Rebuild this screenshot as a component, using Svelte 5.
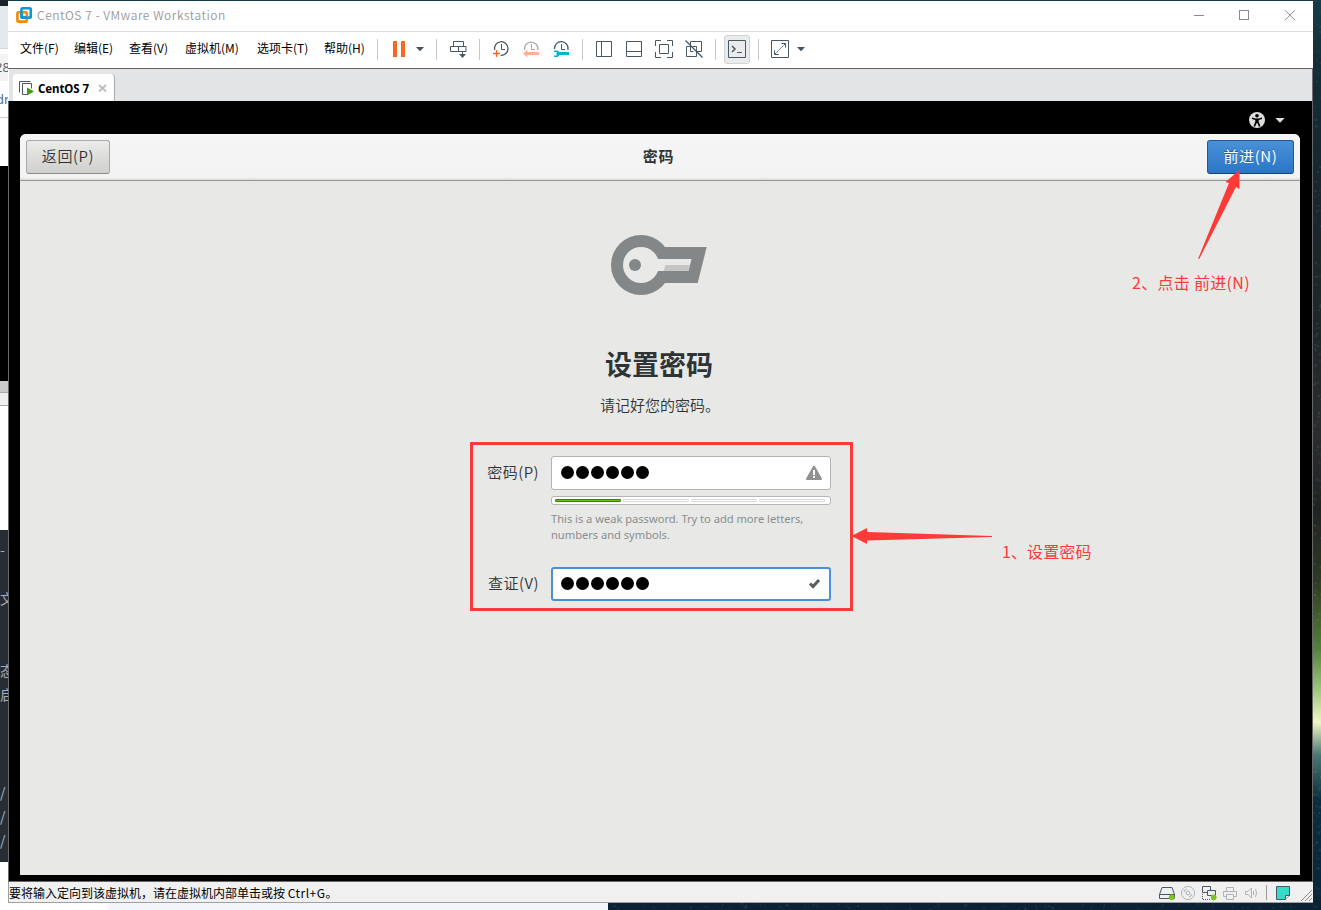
<script>
  const menus = ['文件(F)', '编辑(E)', '查看(V)', '虚拟机(M)', '选项卡(T)', '帮助(H)'];
  const dots = [0, 1, 2, 3, 4, 5];
  const noise = (n) => {
    const v = Math.sin(n * 12.9898) * 43758.5453;
    return v - Math.floor(v);
  };
  const stars = Array.from({ length: 260 }, (_, i) => ({
    x: 1313 + noise(i + 1) * 8,
    y: noise(i + 301) * 910,
    o: noise(i + 601) * 0.14
  }));
  const bottomStars = Array.from({ length: 160 }, (_, i) => ({
    x: 608 + noise(i + 901) * 712,
    y: 903 + noise(i + 1201) * 7,
    o: noise(i + 1501) * 0.12
  }));
</script>

<div class="desktop">
  <div class="behind">
    <div class="b1"></div>
    <div class="b2"></div>
    <div class="b3">28</div>
    <div class="b4">dr</div>
    <div class="b5"></div>
    <div class="b6"></div>
    <div class="b7"></div>
    <div class="b8"></div>
    <div class="b9"></div>
    <div class="editor">
      <span class="l1">-</span><span class="l2">文</span><span class="l3">态</span><span class="l4">启</span>
      <span class="l5">/</span><span class="l5">/</span><span class="l5">/</span>
    </div>
  </div>
  <div class="pale"></div>
  <svg class="sky" viewBox="0 0 1321 910">
    {#each [...stars, ...bottomStars] as s}
      <rect x={s.x} y={s.y} width="2" height="2" fill="#a9c4c8" opacity={s.o} />
    {/each}
  </svg>

  <div class="window">
    <header class="titlebar">
      <svg class="logo" viewBox="16 6 17 18" width="17" height="18">
        <rect x="21.5" y="8.3" width="9.3" height="9.3" rx="1.2" fill="none" stroke="#0e95d3" stroke-width="2.6" />
        <rect x="17.4" y="12.2" width="9.4" height="9.4" rx="1.2" fill="none" stroke="#f38b00" stroke-width="2.6" />
        <path d="M21.5 11v5.6a1 1 0 0 0 1 1h5" fill="none" stroke="#0e95d3" stroke-width="2.6" />
      </svg>
      <span class="title">CentOS 7 - VMware Workstation</span>
      <svg class="controls" viewBox="1176 1 137 30" width="137" height="30" fill="none" stroke="#8b8b8b">
        <path d="M1194 15.5h10" /><rect x="1239.500" y="10.500" width="9" height="9" /><path d="M1285 10.200l10 10M1295 10.200l-10 10" />
      </svg>
    </header>

    <div class="menubar">
      <nav>{#each menus as m}<span>{m}</span>{/each}</nav>
      <i class="sep"></i>
      <svg viewBox="384 32 30 36" width="30"><path d="M393 41h4v16h-4zM401 41h4v16h-4z" fill="#fc671c" /></svg>
      <svg viewBox="414 32 16 36" width="16"><path d="M416 47h8l-4 4.300z" fill="#44525f" /></svg>
      <i class="sep"></i>
      <svg class="line" viewBox="443 32 30 36" width="30"><path d="M453.500 41.500h10v5h-10zM450.500 46.500h15.500v5h-15.500zM458.500 46.500v5M462.500 51.500v5" /><path d="M459 54h7l-3.500 4z" fill="#485865" stroke="none" /></svg>
      <i class="sep"></i>
      <svg class="line" viewBox="486 32 30 36" width="30"><path d="M494.600 50a6.800 6.800 0 1 1 6 5.300" stroke-width="1.300" /><path d="M501.500 44v5.500h3.500" /><path d="M496.500 50v7M493 53.500h7" stroke="#fc671c" stroke-width="1.300" /></svg>
      <svg class="line" viewBox="516 32 30 36" width="30"><path d="M524.500 50a6.800 6.800 0 1 1 13.400 0" stroke="#a4abb2" stroke-width="1.300" /><path d="M531.500 44v5.500h3.500" stroke="#a4abb2" /><path d="M523 53.500l4.500-4v2.500H539v3h-11.500v2.500z" fill="#ffb28e" stroke="none" /></svg>
      <svg class="line" viewBox="546 32 30 36" width="30"><path d="M554.500 49a6.800 6.800 0 1 1 13.400 1" stroke-width="1.300" /><path d="M561.500 44v5.500h3.500" /><path d="M554 50.500h3c1 0 2 1 2.500 1.500H569v3h-9.500c-.5 1-1.500 2-2.500 2h-3v-1.500h2.500v-3.500H554z" fill="#08b4d2" stroke="none" /></svg>
      <i class="sep"></i>
      <svg class="line" viewBox="589 32 30 36" width="30"><path d="M596.500 41.500h15v15h-15zM601.500 41.500v15" /></svg>
      <svg class="line" viewBox="619 32 30 36" width="30"><path d="M626.500 41.500h15v15h-15zM626.500 51.500h15" /></svg>
      <svg class="line" viewBox="649 32 30 36" width="30"><path d="M655.500 46v-5.500h5.500M667 40.500h5.500V46M672.500 52v5.500H667M661 57.500h-5.500V52M659.500 44.500h9v9h-9z" /></svg>
      <svg class="line" viewBox="679 32 30 36" width="30"><path d="M690.500 46.500v-5h11v10h-5M686.500 46.500h6M686.500 46.500v10h10v-8M690.500 46.500v5h3M693 46.500h3.500v2" /><path d="M685.500 40.500l17 17" stroke-width="1.200" /></svg>
      <i class="sep"></i>
      <svg class="line" viewBox="722 32 30 36" width="30"><rect x="724.500" y="35.500" width="25" height="28" rx="2.500" fill="#e9ebed" stroke="#cfd3d4" /><path d="M728.500 40.500h17v17h-17z" /><path d="M732 46l3 3-3 3" stroke-width="1.500" /><path d="M737 52.500h5" /></svg>
      <i class="sep"></i>
      <svg class="line" viewBox="765 32 30 36" width="30"><path d="M771.500 40.500h17v17h-17zM781.500 43.500h4v4M774.500 50.500v4h4" /><path d="M785 44l-10 10" stroke-dasharray="2 1" /></svg>
      <svg viewBox="795 32 16 36" width="16"><path d="M797 47h8l-4 4.300z" fill="#44525f" /></svg>
    </div>

    <div class="tabs">
      <div class="tab">
        <svg viewBox="19 80 15 16" width="15" height="16" fill="none" stroke="#4b5a66"><path d="M19.500 92.500v-11h11" /><path d="M27 94.500h-4.500v-11h9v5" /><path d="M27 87.500l7 4-7 4z" fill="#47990f" stroke="none" /></svg>
        <b>CentOS 7</b>
        <svg viewBox="98 83 9 9" width="9" height="9" stroke="#bdbdbd" stroke-width="1.800"><path d="M99 84l7 6.500M106 84l-7 6.500" /></svg>
      </div>
    </div>

    <main class="guest">
      <div class="topbar">
        <svg viewBox="1245 108 44 24" width="44" height="24">
          <circle cx="1257" cy="120" r="8" fill="#dcdcdc" />
          <circle cx="1257" cy="115.700" r="1.800" /><path d="M1252 117.500l3.500 1h3l3.500-1v1.500l-3.300 1v1.800l1.800 4.400-1.500.5-2-4.200-2 4.200-1.500-.5 1.800-4.400V120l-3.300-1z" />
          <path d="M1275.300 118h9.400l-4.700 4.800z" fill="#dcdcdc" />
        </svg>
      </div>
      <section class="screen">
        <div class="head">
          <button class="back">返回(P)</button>
          <h1>密码</h1>
          <button class="next">前进(N)</button>
        </div>
        <div class="body">
          <svg class="key" viewBox="610 234 98 62" width="98" height="62">
            <circle cx="641" cy="265" r="30" fill="#848787" /><path d="M660 247h46.700l-9 36H660z" fill="#848787" />
            <circle cx="641" cy="265" r="18" fill="#e9e9e7" /><path d="M656 259h35.500l-3 12H656z" fill="#e9e9e7" />
            <path d="M665.300 265h24.700l-1.500 6h-24.700z" fill="#c4c5c4" /><circle cx="635" cy="265" r="6" fill="#848787" />
          </svg>
          <h2>设置密码</h2>
          <p class="sub">请记好您的密码。</p>
          <div class="form">
            <label for="pw">密码(P)</label>
            <div class="field" id="pw">
              {#each dots as d}<i></i>{/each}
              <svg viewBox="805 464 18 17" width="18" height="17"><path d="M814 466.500l7 12.500h-14z" fill="#929292" stroke="#929292" stroke-width="2" stroke-linejoin="round" /><path d="M813 470h2v5h-2zM813 476h2v2h-2z" fill="#fff" /></svg>
            </div>
            <div class="meter"><span class="on"></span><span></span><span></span><span></span></div>
            <p class="hint">This is a weak password. Try to add more letters,<br />numbers and symbols.</p>
            <label for="vf" class="second">查证(V)</label>
            <div class="field focus second" id="vf">
              {#each dots as d}<i></i>{/each}
              <svg viewBox="805 576 18 17" width="18" height="17"><path d="M810 584.500l3 3 6-6.500" fill="none" stroke="#555d5d" stroke-width="3" /></svg>
            </div>
          </div>
        </div>
      </section>
    </main>

    <footer>
      <span class="msg">要将输入定向到该虚拟机，请在虚拟机内部单击或按 <em>Ctrl+G。</em></span>
      <svg viewBox="1157 883 21 19" width="21"><path d="M1159.500 894.500l2.500-7h10l2.500 7v4h-15zM1159.500 894.500h15" fill="none" stroke="#485865" /><circle cx="1171.700" cy="897.300" r="2.900" fill="#7dc41e" /></svg>
      <svg viewBox="1178 883 21 19" width="21" fill="none" stroke="#adb3b8"><circle cx="1188" cy="893" r="6.600" /><circle cx="1188" cy="893" r="2" /><path d="M1184 892a4 4 0 0 1 3-3M1192 894a4 4 0 0 1-3 3" /></svg>
      <svg viewBox="1199 883 21 19" width="21"><path d="M1208 892.500h-5.500v-6h8v4M1207.500 890.500h8v5h-8z" fill="none" stroke="#485865" /><path d="M1202.500 894v6M1203 899.500h8" fill="none" stroke="#485865" stroke-dasharray="1 1" /><circle cx="1213.700" cy="897.300" r="2.900" fill="#7dc41e" /></svg>
      <svg viewBox="1220 883 21 19" width="21" fill="none" stroke="#adb3b8"><path d="M1226.500 891v-3.500h7v3.500M1226.500 896.500h-3v-5h13v5h-3M1226.500 894.500h7v5h-7z" /></svg>
      <svg viewBox="1241 883 21 19" width="21" fill="none" stroke="#adb3b8"><path d="M1245.500 891.500h2.500l3.500-3.500v10l-3.500-3.500h-2.500z" /><path d="M1253.500 891v4M1255.500 889q2 4 0 8" /></svg>
      <i></i>
      <svg viewBox="1273 883 21 19" width="21"><path d="M1276.500 886.500h13v9l-4 4h-9z" fill="#35dcc8" stroke="#485865" /><path d="M1285.500 899.500v-4h4" fill="#efefef" stroke="#485865" /></svg>
      <svg viewBox="1294 883 19 19" width="19" stroke="#8d8d8d"><path d="M1301 901l11-11M1305 901l7-7M1309 901l3-3" /></svg>
    </footer>
  </div>

  <div class="mark-box"></div>
  <svg class="marks" viewBox="0 0 1321 910" fill="#fc3a38">
    <path d="M851.500 536l15.500-8v4l125 4v1l-125 3.500v3.500z" />
    <path d="M1239.500 170l-14 12 3.500 1-30.800 75.500 1 .5 36.800-72 3.500 2z" />
  </svg>
  <span class="note n1">1、设置密码</span>
  <span class="note n2">2、点击 前进(N)</span>
</div>

<style>
  :global(body) { margin: 0; overflow: hidden; }
  .desktop { position: relative; width: 1321px; height: 910px; overflow: hidden; font-family: "Noto Sans CJK SC", sans-serif; font-size: 12px;
    background: linear-gradient(#173b48 0, #142d38 60px, #16272e 180px, #1d2729 340px, #2a2d2e 430px, #1f2423 510px, #2b3a22 580px, #56813d 650px, #9fc67d 690px, #eff8c5 722px, #4b7773 755px, #0b2c3c 800px, #0b2536 910px); }
  .sky, .marks { position: absolute; inset: 0; width: 1321px; height: 910px; pointer-events: none; }
  .pale { position: absolute; left: 0; top: 902px; width: 608px; height: 8px; background: linear-gradient(90deg, #fff 105px, #f2f5fa 110px); }
  .desktop::before { content: ""; position: absolute; left: 0; top: 900px; width: 1321px; height: 10px; background: #0a2233; }
  .behind { position: absolute; left: 0; top: 0; width: 8px; height: 910px; overflow: hidden; background: #fff; display: flex; flex-direction: column; color: #666; font: 13px/26px "Noto Sans", sans-serif; }
  .behind > div { flex: none; box-sizing: border-box; white-space: nowrap; }
  .b1 { height: 6px; background: #1c242b; }
  .b2 { height: 43px; background: #e6e9eb; border-bottom: 1px solid #d5d8da; }
  .b3 { margin-top: 5px; height: 27px; background: #f3f3f3; text-indent: -5px; }
  .b4 { height: 37px; border-bottom: 1px solid #ccc; line-height: 36px; text-indent: -4px; color: #4d6f90; }
  .b5 { height: 48px; }
  .b6 { height: 215px; background: #000; }
  .b7 { height: 11px; background: #cacaca; }
  .b8 { height: 14px; background: #efefef; border: solid #aaa; border-width: 1px 0; }
  .b9 { height: 124px; }
  .editor { height: 332px; background: #282c34; color: #a4adb9; font-family: "Noto Sans CJK SC", sans-serif; font-size: 14px; line-height: 24px; display: flex; flex-direction: column; }
  .l1 { margin-top: 7px; } .l2 { margin-top: 25px; } .l3 { margin-top: 48px; } .l4 { margin-bottom: 74px; }
  .l5 { color: #a6b9be; }

  .window { position: absolute; left: 8px; top: 1px; width: 1305px; height: 902px; box-sizing: border-box; background: #fff; display: flex; flex-direction: column; border-bottom: 1px solid #a0a0a0; }
  .titlebar { height: 30px; display: flex; align-items: center; padding-left: 8px; border-bottom: 1px solid #dedede; flex: none; }
  .logo { margin-top: -2px; }
  .title { flex: 1; margin-left: 4px; color: #999; font-size: 12px; letter-spacing: .52px; line-height: 28px; margin-top: -2px; font-weight: 350; }
  .menubar { height: 36px; flex: none; display: flex; align-items: stretch; border-bottom: 1px solid #646464; }
  .menubar svg { height: 36px; flex: none; }
  .line { fill: none; stroke: #485865; }
  .sep { flex: none; width: 1px; height: 21px; margin: 7px 6px 0; background: #c8c8c8; }
  nav { display: grid; grid-template-columns: 54px 55px 56px 72px 67px 47px; width: 351px; padding-left: 12px; line-height: 31px; color: #000; white-space: nowrap; }
  .tabs { height: 32px; flex: none; margin-left: 1px; background: #e3e4e6; display: flex; align-items: flex-end; border-right: 1px solid #6f6f6f; }
  .tab { height: 27px; width: 102px; margin-left: 4px; box-sizing: border-box; padding: 1px 7px 0 6px; background: #fff; border-radius: 4px 4px 0 0; border-right: 1px solid #aaa; display: flex; align-items: center; justify-content: space-between; }
  .tab b { font: 700 11.5px "Noto Sans", sans-serif; letter-spacing: -.1px; margin-left: -5px; white-space: nowrap; }
  .guest { flex: 1; min-height: 0; background: #000; border: 1px solid #686868; border-top: 0; display: flex; flex-direction: column; padding: 0 12px 6px 11px; box-sizing: border-box; }
  .topbar { height: 33px; flex: none; display: flex; justify-content: flex-end; padding: 7px 11px 0 0; box-sizing: border-box; }
  .screen { flex: 1; min-height: 0; background: #e8e8e6; border-radius: 6px 6px 0 0; overflow: hidden; display: flex; flex-direction: column; }
  .head { height: 47px; box-sizing: border-box; flex: none; background: linear-gradient(#f5f5f5 0, #f3f3f3 43px, #dededc 46px); border-bottom: 1px solid #949590; padding: 6px; display: flex; justify-content: space-between; align-items: flex-start; }
  button { height: 34px; padding: 0 0 4px; box-sizing: border-box; border-radius: 3px; font: 350 15px "Noto Sans CJK SC", sans-serif; letter-spacing: .6px; }
  .back { width: 84px; color: #2e3436; border: 1px solid #a9aaa7; border-bottom-color: #8c8d89; background: linear-gradient(#ebebea, #cfcfcd); }
  .next { width: 87px; color: #fff; border: 1px solid #1f5899; border-bottom-color: #164274; background: linear-gradient(#4a90d9, #2a76c6); text-shadow: 0 -1px #215d9c; font-weight: 400; }
  h1 { margin: 0; font-size: 15px; line-height: 32px; color: #2e3436; font-weight: 700; letter-spacing: .8px; }
  .body { display: flex; flex-direction: column; align-items: center; padding-top: 53px; }
  .key { margin-left: -2px; flex: none; }
  h2 { margin: 48px 2px 0 0; font-size: 27px; line-height: 40px; color: #2e3436; font-weight: 700; }
  .sub { margin: 10px 0 0; font-size: 15px; line-height: 22px; color: #2e3436; font-weight: 350; }
  .form { margin: 40px 0 0 -3px; width: 345px; display: grid; grid-template-columns: 53px 280px; column-gap: 12px; }
  label { font-size: 15px; font-weight: 350; line-height: 32px; color: #2e3436; display: flex; justify-content: flex-end; letter-spacing: .5px; white-space: nowrap; }
  .field { height: 34px; box-sizing: border-box; background: #fff; border: 1px solid #b3b4b1; border-radius: 3px; display: flex; align-items: center; gap: 2px; padding: 0 7px 2px 9px; }
  .field i { width: 13px; height: 13px; border-radius: 50%; background: #000; flex: none; }
  .field svg { margin-left: auto; margin-top: 1px; }
  .focus { border: 2px solid #4a90d9; padding: 0 6px 2px 8px; }
  .meter { grid-column: 2; margin-top: 6px; height: 9px; box-sizing: border-box; border: 1px solid #b5b6b3; border-radius: 3px; background: #fff; padding: 2px 5px 2px 3px; display: flex; gap: 2px; }
  .meter span { flex: 1; border: 1px solid #d8d8d8; height: 1px; border-radius: 1px; }
  .meter .on { background: #67c70c; border-color: #3b7b05; }
  .hint { grid-column: 2; margin: 6px 0 0; font: 11.200px/16px "Noto Sans", sans-serif; letter-spacing: -.045px; color: #8b8e8f; white-space: nowrap; }
  .second { margin-top: 24px; }
  footer { height: 20px; flex: none; background: #f0f0f0; display: flex; align-items: center; border-left: 1px solid #a0a0a0; box-sizing: border-box; }
  footer svg { height: 19px; flex: none; margin-top: 1px; }
  footer i { width: 1px; height: 15px; margin: 0 6px 0 4px; background: #999; }
  .msg { flex: 1; color: #000; line-height: 18px; font-size: 12px; margin-top: 2px; }
  .msg em { font-style: normal; letter-spacing: .5px; }
  .mark-box { position: absolute; left: 470px; top: 442px; width: 383px; height: 169px; box-sizing: border-box; border: 3px solid #fc3a38; }
  .note { position: absolute; color: #fc3a38; font-size: 16px; line-height: 24px; white-space: nowrap; }
  .n1 { left: 1002px; top: 539px; letter-spacing: .1px; }
  .n2 { left: 1132px; top: 270px; letter-spacing: .3px; }
</style>
